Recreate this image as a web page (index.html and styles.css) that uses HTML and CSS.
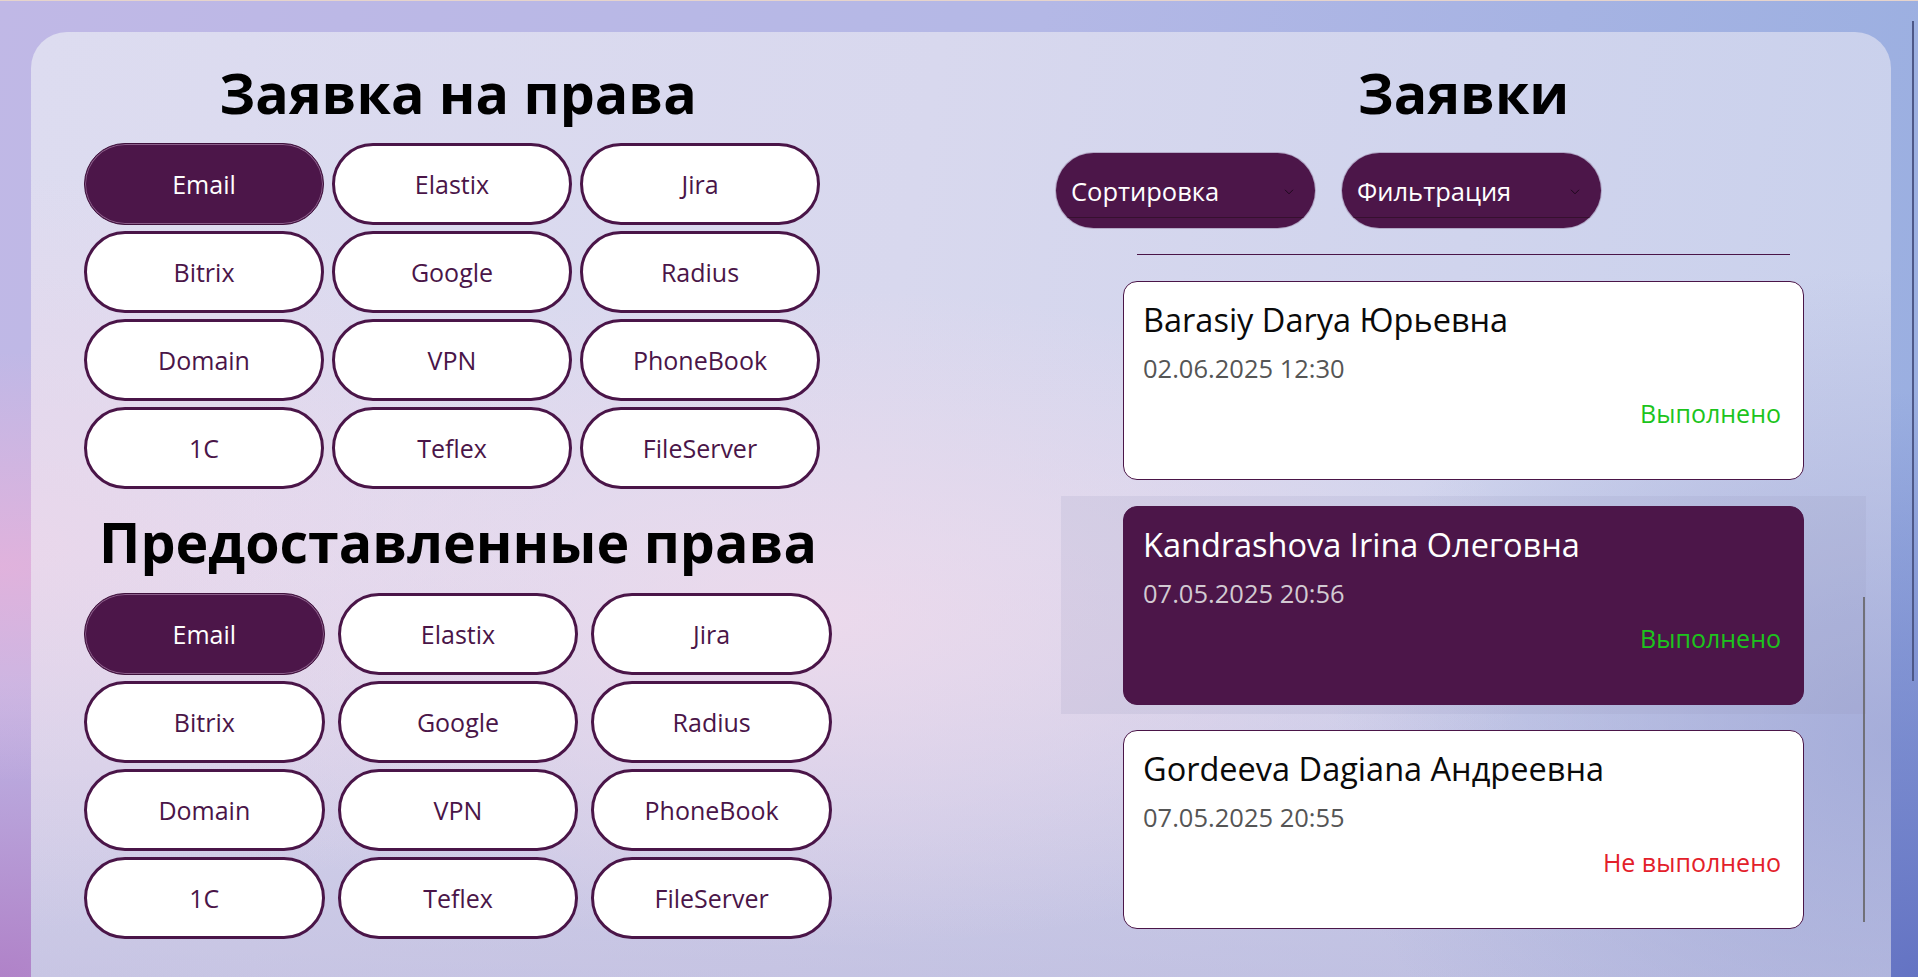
FILE: index.html
```html
<!DOCTYPE html>
<html lang="ru">
<head>
<meta charset="utf-8">
<title>Заявки на права</title>
<link rel="stylesheet" href="styles.css">
</head>
<body>
<div class="app">
  <main class="panel">
    <section class="rights">
      <h1 class="title">Заявка на права</h1>
      <div class="perm-grid perm-grid--request">
        <button class="perm perm--active">Email</button>
        <button class="perm">Elastix</button>
        <button class="perm">Jira</button>
        <button class="perm">Bitrix</button>
        <button class="perm">Google</button>
        <button class="perm">Radius</button>
        <button class="perm">Domain</button>
        <button class="perm">VPN</button>
        <button class="perm">PhoneBook</button>
        <button class="perm">1C</button>
        <button class="perm">Teflex</button>
        <button class="perm">FileServer</button>
      </div>
      <h1 class="title title--granted">Предоставленные права</h1>
      <div class="perm-grid perm-grid--granted">
        <button class="perm perm--active">Email</button>
        <button class="perm">Elastix</button>
        <button class="perm">Jira</button>
        <button class="perm">Bitrix</button>
        <button class="perm">Google</button>
        <button class="perm">Radius</button>
        <button class="perm">Domain</button>
        <button class="perm">VPN</button>
        <button class="perm">PhoneBook</button>
        <button class="perm">1C</button>
        <button class="perm">Teflex</button>
        <button class="perm">FileServer</button>
      </div>
    </section>

    <section class="requests">
      <h1 class="title">Заявки</h1>
      <div class="toolbar">
        <div class="combo">
          <span class="combo__text">Сортировка</span>
          <svg class="combo__chevron" width="10" height="6" viewBox="0 0 10 6"><path d="M1 0.8 L5 4.8 L9 0.8" fill="none" stroke="#1e081c" stroke-width="1"/></svg>
        </div>
        <div class="combo">
          <span class="combo__text">Фильтрация</span>
          <svg class="combo__chevron" width="10" height="6" viewBox="0 0 10 6"><path d="M1 0.8 L5 4.8 L9 0.8" fill="none" stroke="#1e081c" stroke-width="1"/></svg>
        </div>
      </div>
      <div class="sep"></div>
      <div class="list">
        <div class="list__item">
          <div class="card">
            <div class="card__name">Barasiy Darya Юрьевна</div>
            <div class="card__date">02.06.2025 12:30</div>
            <div class="card__status card__status--done">Выполнено</div>
          </div>
        </div>
        <div class="list__item list__item--selected">
          <div class="card card--selected">
            <div class="card__name">Kandrashova Irina Олеговна</div>
            <div class="card__date">07.05.2025 20:56</div>
            <div class="card__status card__status--done">Выполнено</div>
          </div>
        </div>
        <div class="list__item">
          <div class="card">
            <div class="card__name">Gordeeva Dagiana Андреевна</div>
            <div class="card__date">07.05.2025 20:55</div>
            <div class="card__status card__status--fail">Не выполнено</div>
          </div>
        </div>
        <div class="list__scroll"></div>
      </div>
    </section>
  </main>
  <div class="page-scroll"></div>
</div>
</body>
</html>
```

FILE: styles.css
```css
html, body {
  margin: 0;
  padding: 0;
  height: 100%;
  overflow: hidden;
}

body {
  font-family: "Open Sans", "Noto Sans", sans-serif;
  border-top: 1px solid #e6d4cc;
  box-sizing: border-box;
  background:
    radial-gradient(35% 22% at 0% 58%, rgba(226, 178, 220, 0.95), rgba(226, 178, 220, 0) 100%),
    radial-gradient(30% 30% at 0% 100%, rgba(176, 130, 200, 1), rgba(176, 130, 200, 0) 100%),
    radial-gradient(40% 60% at 100% 100%, rgba(100, 115, 195, 1), rgba(100, 115, 195, 0) 100%),
    linear-gradient(100deg, #c0b8e6 0%, #b4b8e6 50%, #98aee0 100%);
}

.app {
  position: relative;
  height: 100%;
  box-sizing: border-box;
  padding: 31px 27px 0 31px;
  display: flex;
  flex-direction: column;
}

.panel {
  flex: 1;
  display: flex;
  min-height: 0;
  box-sizing: border-box;
  padding: 28px 20px 0 53px;
  border-radius: 36px 36px 0 0;
  background:
    radial-gradient(40% 35% at 42% 62%, rgba(238, 218, 236, 0.9), rgba(238, 218, 236, 0) 100%),
    radial-gradient(30% 40% at 0% 55%, rgba(236, 214, 234, 0.8), rgba(236, 214, 234, 0) 100%),
    radial-gradient(30% 50% at 100% 75%, rgba(160, 168, 215, 0.85), rgba(160, 168, 215, 0) 100%),
    linear-gradient(180deg, rgba(255, 255, 255, 0) 55%, rgba(170, 165, 210, 0.4) 100%),
    linear-gradient(100deg, #dddcf0 0%, #d8d8ee 45%, #c8d0ec 100%);
}

.title {
  margin: 0;
  font-size: 55.5px;
  line-height: 66px;
  font-weight: 700;
  color: #000;
  text-align: center;
}

/* left column */
.rights {
  width: 748px;
  display: flex;
  flex-direction: column;
}

.title--granted {
  margin-top: 20px;
}

.perm-grid {
  display: grid;
  grid-auto-rows: 82px;
  row-gap: 6px;
}

.perm-grid--request {
  margin-top: 17px;
  grid-template-columns: repeat(3, 240px);
  column-gap: 8px;
}

.perm-grid--granted {
  margin-top: 18px;
  grid-template-columns: repeat(3, 1fr);
  column-gap: 13px;
}

.perm {
  box-sizing: border-box;
  margin: 0;
  padding: 0;
  border: 3px solid #4a1548;
  border-radius: 41px;
  background: #fff;
  color: #4a1548;
  font-family: inherit;
  font-size: 25px;
  line-height: 30px;
}

.perm--active {
  background: #4c1649;
  color: #fff;
  border: 1px solid #3e103b;
  box-shadow: inset 0 0 0 1px rgba(214, 180, 214, 0.45);
}

/* right column */
.requests {
  margin-left: 224px;
  width: 815px;
  display: flex;
  flex-direction: column;
}

.toolbar {
  display: flex;
  gap: 27px;
  margin-top: 27px;
}

.combo {
  position: relative;
  box-sizing: border-box;
  width: 259px;
  height: 75px;
  border-radius: 38px;
  background: #4c1649;
  display: flex;
  align-items: center;
  justify-content: space-between;
  padding: 0 21px 0 15px;
  color: #fff;
  font-size: 25.5px;
  line-height: 30px;
  overflow: hidden;
  box-shadow: 0 0 0 1px rgba(120, 90, 130, 0.35);
}

.combo::after {
  content: "";
  position: absolute;
  left: 0;
  right: 0;
  bottom: 10px;
  height: 1px;
  background: #36102f;
}

.combo__chevron {
  display: block;
  margin-top: 2px;
}

.sep {
  margin: 26px 81px 0;
  height: 1px;
  background: #4a1548;
}

.list {
  position: relative;
  margin: 16px 5px 0;
  display: flex;
  flex-direction: column;
  gap: 6.5px;
}

.list__item {
  display: flex;
  justify-content: center;
  padding: 10px 0 9px;
}

.list__item--selected {
  background: rgba(150, 150, 185, 0.16);
}

.card {
  box-sizing: border-box;
  width: 681px;
  height: 199px;
  border: 1px solid #4a1548;
  border-radius: 14px;
  background: #fff;
  padding: 18px 22px 0 19px;
}

.card--selected {
  background: #4c1649;
  border-color: #4c1649;
}

.card__name {
  font-size: 32.5px;
  line-height: 40px;
  color: #0a0a0a;
}

.card__date {
  margin-top: 14px;
  font-size: 25.5px;
  line-height: 29px;
  color: #555;
}

.card__status {
  margin-top: 15px;
  font-size: 25px;
  line-height: 30px;
  text-align: right;
}

.card--selected .card__name {
  color: #fff;
}

.card--selected .card__date {
  color: #d2cad2;
}

.card__status--done {
  color: #1cc41c;
}

.card__status--fail {
  color: #e3202a;
}

.list__scroll {
  position: absolute;
  right: 1px;
  top: 326px;
  width: 2px;
  height: 325px;
  background: #707078;
}

.page-scroll {
  position: absolute;
  right: 4px;
  top: 20px;
  width: 2px;
  height: 660px;
  background: #4e5888;
}
```
